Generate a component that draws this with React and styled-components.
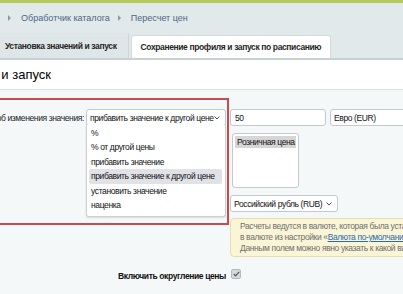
import React from "react";
import styled, { createGlobalStyle, css } from "styled-components";

const GlobalStyle = createGlobalStyle`
  html, body { margin: 0; padding: 0; }
  body {
    width: 403px;
    height: 294px;
    overflow: hidden;
    background: #f5f8f9;
    font-family: "Liberation Sans", Arial, Helvetica, sans-serif;
    color: #000;
  }
`;

const formText = css`
  font-size: 8.5px;
  letter-spacing: -0.38px;
`;

const Page = styled.div`
  width: 403px;
  height: 294px;
  overflow: hidden;
  display: flex;
  flex-direction: column;
`;

const TopStrip = styled.div`
  height: 3px;
  background: #b6c95c;
  flex: none;
`;

const Crumbs = styled.div`
  height: 30px;
  flex: none;
  background: #e2e9ea;
  display: flex;
  align-items: center;
  padding-left: 8px;
  gap: 8px;
  font-size: 9px;
  color: #4a6684;
`;

const Arrow = styled.span`
  width: 0;
  height: 0;
  border-left: 3px solid #8a9aa4;
  border-top: 3px solid transparent;
  border-bottom: 3px solid transparent;
  margin-right: 2px;
`;

const Crumb = styled.span`
  display: flex;
  align-items: center;
  gap: 8px;
  white-space: nowrap;
`;

const TabsBar = styled.div`
  height: 25px;
  flex: none;
  background: #e2e9ea;
  display: flex;
  align-items: flex-end;
  gap: 2px;
  border-bottom: 2px solid #c8d1d3;
`;

const Tab = styled.div`
  height: ${(p) => (p.$active ? "25px" : "23px")};
  box-sizing: border-box;
  display: flex;
  align-items: center;
  padding: ${(p) => (p.$active ? "0 11px 0 4px" : "0 9px")};
  background: ${(p) => (p.$active ? "#dfe6e7" : "#ffffff")};
  border: 1px solid ${(p) => (p.$active ? "transparent" : "#d3dadc")};
  border-bottom: none;
  border-right-color: ${(p) => (p.$active ? "#cdd5d7" : "#d3dadc")};
  border-radius: ${(p) => (p.$active ? "0" : "3px 3px 0 0")};
  ${formText};
  font-weight: bold;
  color: #1f1f1f;
  white-space: nowrap;
`;

const TitleBlock = styled.div`
  height: 29px;
  flex: none;
  background: #fff;
  border-bottom: 1px solid #dce3e5;
  display: flex;
  align-items: center;
`;

const ClipRight = styled.div`
  width: ${(p) => p.$w}px;
  overflow: hidden;
  display: flex;
  justify-content: flex-end;
  white-space: nowrap;
  flex: none;
`;

const Title = styled.div`
  font-size: 13px;
  color: #000;
  white-space: nowrap;
`;

const Content = styled.div`
  padding-top: 8px;
  display: flex;
  flex-direction: column;
`;

const Row = styled.div`
  display: flex;
  align-items: flex-start;
`;

const Highlight = styled.div`
  position: relative;
  width: 233px;
  height: 127px;
  margin-left: -4px;
  box-sizing: border-box;
  border: 2px solid #c94a4c;
  padding-top: 9px;
  padding-left: 2px;
  flex: none;
`;

const FieldRow = styled.div`
  display: flex;
  align-items: center;
  gap: 2px;
`;

const Label = styled.div`
  ${formText};
  color: #222;
`;

const SelectBox = styled.div`
  position: relative;
  width: ${(p) => p.$w}px;
  height: 17px;
  box-sizing: border-box;
  border: 1px solid #c3c9cc;
  border-radius: 3px;
  background: #fff;
  display: flex;
  align-items: center;
  padding-left: 3px;
  ${formText};
  color: #111;
  white-space: nowrap;
  overflow: hidden;
  flex: none;
`;

const Chevron = styled.svg`
  position: absolute;
  right: 5px;
  top: 6px;
`;

const Dropdown = styled.div`
  position: absolute;
  left: 88px;
  top: 25px;
  width: 140px;
  box-sizing: border-box;
  background: #fff;
  border: 1px solid #cfcfcf;
  border-top: none;
  border-radius: 0 0 3px 3px;
  box-shadow: 0 1px 2px rgba(0, 0, 0, 0.12);
  padding: 1px 3px 4px 2px;
  z-index: 2;
`;

const Option = styled.div`
  height: 14.4px;
  line-height: 14.4px;
  padding-left: 2px;
  ${formText};
  color: #111;
  border-radius: 2px;
  white-space: nowrap;
  background: ${(p) => (p.$selected ? "#e1e1e8" : "transparent")};
`;

const RightCol = styled.div`
  display: flex;
  flex-direction: column;
  padding-top: 11px;
  padding-left: 1px;
`;

const InputRow = styled.div`
  display: flex;
  gap: 4px;
`;

const TextInput = styled.div`
  width: ${(p) => p.$w}px;
  height: 17px;
  box-sizing: border-box;
  border: 1px solid #c3c9cc;
  border-radius: 3px;
  background: #fff;
  display: flex;
  align-items: center;
  padding-left: 4px;
  ${formText};
  color: #111;
  white-space: nowrap;
  flex: none;
`;

const ListBox = styled.div`
  width: 67px;
  height: 55px;
  margin: 7px 0 0 2px;
  box-sizing: border-box;
  border: 1px solid #c3c9cc;
  border-radius: 3px;
  background: #fff;
  padding: 2px;
`;

const ListItem = styled.div`
  height: 12px;
  line-height: 12px;
  padding-left: 2px;
  background: #d6d6d6;
  ${formText};
  color: #111;
  white-space: nowrap;
`;

const RubSelect = styled(SelectBox)`
  margin-top: 7px;
`;

const Notice = styled.div`
  margin-top: 6px;
  width: 260px;
  box-sizing: border-box;
  background: #faf5d6;
  border: 1px solid #e6deaf;
  border-radius: 4px;
  padding: 2px 9px 2px;
  ${formText};
  line-height: 11px;
  color: #707070;
  white-space: nowrap;
`;

const Link = styled.a`
  color: #2a6bb0;
  text-decoration: underline;
`;

const CheckRow = styled.div`
  display: flex;
  align-items: center;
  gap: 5px;
  margin-top: 11px;
  height: 11px;
`;

const CheckLabel = styled.div`
  width: 226px;
  text-align: right;
  ${formText};
  font-weight: bold;
  color: #111;
  margin-top: 4px;
`;

const CheckBox = styled.div`
  width: 10px;
  height: 10px;
  box-sizing: border-box;
  background: #d5d9db;
  border: 1px solid #b3babd;
  border-radius: 2px;
  display: flex;
  align-items: center;
  justify-content: center;
`;

const chevron = (
  <Chevron width="6" height="4" viewBox="0 0 6 4">
    <polyline points="0.5,0.5 3,3 5.5,0.5" fill="none" stroke="#555" strokeWidth="1" />
  </Chevron>
);

const options = [
  "%",
  "% от другой цены",
  "прибавить значение",
  "прибавить значение к другой цене",
  "установить значение",
  "наценка",
];

export default function App() {
  return (
    <Page>
      <GlobalStyle />
      <TopStrip />
      <Crumbs>
        <Crumb>
          <Arrow />
          Обработчик каталога
        </Crumb>
        <Crumb>
          <Arrow />
          Пересчет цен
        </Crumb>
      </Crumbs>
      <TabsBar>
        <Tab $active>Установка значений и запуск</Tab>
        <Tab>Сохранение профиля и запуск по расписанию</Tab>
      </TabsBar>
      <TitleBlock>
        <ClipRight $w={51}>
          <Title>Установка значений и запуск</Title>
        </ClipRight>
      </TitleBlock>
      <Content>
        <Row>
          <Highlight>
            <FieldRow>
              <ClipRight $w={84}>
                <Label>Способ изменения значения:</Label>
              </ClipRight>
              <SelectBox $w={140}>
                прибавить значение к другой цене
                {chevron}
              </SelectBox>
            </FieldRow>
            <Dropdown>
              {options.map((o) => (
                <Option key={o} $selected={o === "прибавить значение к другой цене"}>
                  {o}
                </Option>
              ))}
            </Dropdown>
          </Highlight>
          <RightCol>
            <InputRow>
              <TextInput $w={96}>50</TextInput>
              <SelectBox $w={110}>Евро (EUR)</SelectBox>
            </InputRow>
            <ListBox>
              <ListItem>Розничная цена</ListItem>
            </ListBox>
            <RubSelect $w={108}>
              Российский рубль (RUB)
              {chevron}
            </RubSelect>
            <Notice>
              Расчеты ведутся в валюте, которая была установлена для цены
              <br />
              в валюте из настройки «<Link>Валюта по-умолчанию</Link>» модуля
              <br />
              Данным полем можно явно указать к какой валюте
            </Notice>
          </RightCol>
        </Row>
        <CheckRow>
          <CheckLabel>Включить округление цены</CheckLabel>
          <CheckBox>
            <svg width="7" height="6" viewBox="0 0 7 6">
              <polyline points="0.8,3 2.6,4.8 6.2,0.8" fill="none" stroke="#555" strokeWidth="1.2" />
            </svg>
          </CheckBox>
        </CheckRow>
      </Content>
    </Page>
  );
}
